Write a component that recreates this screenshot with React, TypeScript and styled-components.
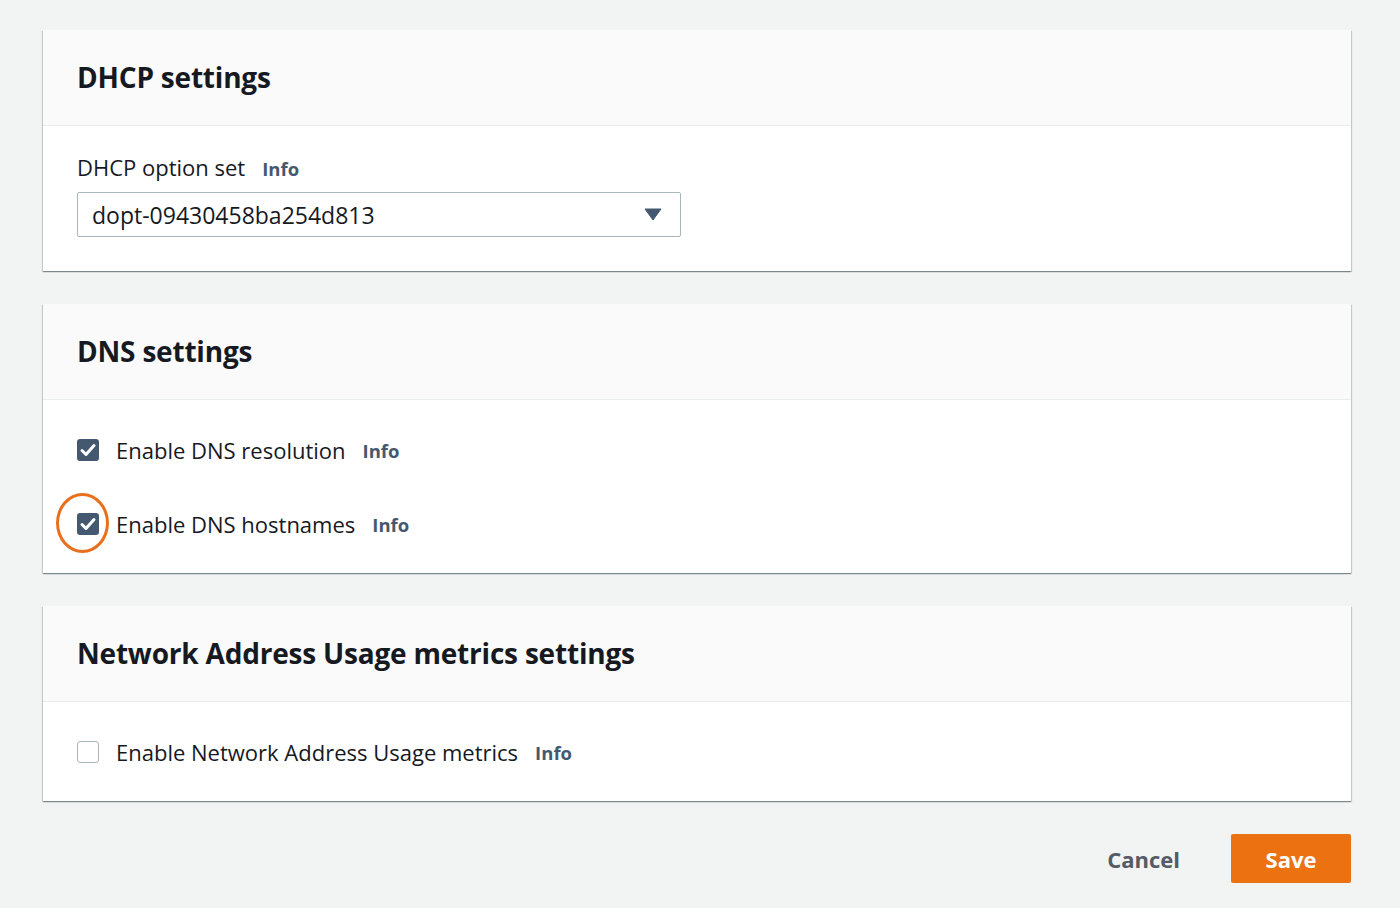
import React from "react";
import styled, { createGlobalStyle } from "styled-components";

const Global = createGlobalStyle`
  html, body { margin: 0; padding: 0; background: #f2f3f3; }
  body { font-family: "Open Sans", "Noto Sans", sans-serif; color: #16191f; }
  * { box-sizing: border-box; }
`;

const Page = styled.div`
  width: 1400px;
  height: 908px;
  padding: 30px 48px 0 43px;
  display: flex;
  flex-direction: column;
  gap: 33px;
`;

const Card = styled.section`
  background: #fff;
  width: 1308px;
  box-shadow: 0 1px 1px 0 rgba(0, 28, 36, 0.3), 1px 1px 1px 0 rgba(0, 28, 36, 0.15),
    -1px 1px 1px 0 rgba(0, 28, 36, 0.15);
`;

const CardHeader = styled.header`
  height: 96px;
  background: #fafafa;
  border-bottom: 1px solid #eaeded;
  display: flex;
  align-items: center;
  padding: 0 34px 2px;
`;

const Title = styled.h2`
  margin: 0;
  font-size: 28px;
  font-weight: 700;
  letter-spacing: -0.2px;
  color: #16191f;
`;

const CardBody = styled.div<{ $pt: number; $pb: number; $gap?: number }>`
  padding: ${(p) => p.$pt}px 34px ${(p) => p.$pb}px;
  display: flex;
  flex-direction: column;
  gap: ${(p) => p.$gap ?? 0}px;
`;

const LabelRow = styled.div`
  display: flex;
  align-items: baseline;
  gap: 17px;
  font-size: 22px;
  height: 28px;
  line-height: 26px;
  margin-bottom: 10px;
`;

const Info = styled.a`
  font-size: 18.5px;
  font-weight: 700;
  color: #44596f;
  text-decoration: none;
`;

const Select = styled.div`
  width: 604px;
  height: 45px;
  border: 1px solid #aab7b8;
  border-radius: 2px;
  display: flex;
  align-items: center;
  justify-content: space-between;
  padding: 0 18px 0 14px;
  font-size: 23px;
  color: #16191f;
`;

const CheckRow = styled.label`
  display: flex;
  align-items: center;
  height: 28px;
  font-size: 22px;
  position: relative;
`;

const Box = styled.span<{ $checked: boolean }>`
  width: 22px;
  height: 22px;
  border-radius: 3px;
  flex: none;
  margin-right: 17px;
  display: flex;
  align-items: center;
  justify-content: center;
  background: ${(p) => (p.$checked ? "#44596f" : "#fff")};
  border: ${(p) => (p.$checked ? "none" : "1.5px solid #aab7b8")};
`;

const Highlight = styled.span`
  position: absolute;
  left: -21px;
  top: -17px;
  width: 53px;
  height: 60px;
  border: 3px solid #e8701d;
  border-radius: 50%;
  pointer-events: none;
`;

const LabelText = styled.span`
  margin-right: 17px;
`;

const Footer = styled.div`
  display: flex;
  justify-content: flex-end;
  align-items: center;
  gap: 51px;
  width: 1308px;
`;

const TextButton = styled.button`
  background: none;
  border: none;
  font-family: inherit;
  font-size: 22px;
  font-weight: 700;
  color: #545b64;
  padding: 0;
`;

const PrimaryButton = styled.button`
  width: 120px;
  height: 49px;
  background: #ec7211;
  border: none;
  border-radius: 2px;
  color: #fff;
  font-family: inherit;
  font-size: 22px;
  font-weight: 700;
`;

const Check = () => (
  <svg width="22" height="22" viewBox="0 0 22 22">
    <path d="M5 11.5l4 4L17 6.5" fill="none" stroke="#fff" strokeWidth="3" strokeLinecap="round" strokeLinejoin="round" />
  </svg>
);

const Caret = () => (
  <svg width="18" height="13" viewBox="0 0 18 13">
    <path d="M1 1h16L9 12z" fill="#44596f" stroke="#44596f" strokeLinejoin="round" />
  </svg>
);

const Checkbox = ({ checked, label, circled }: { checked: boolean; label: string; circled?: boolean }) => (
  <CheckRow>
    {circled && <Highlight />}
    <Box $checked={checked}>{checked && <Check />}</Box>
    <LabelText>{label}</LabelText>
    <Info>Info</Info>
  </CheckRow>
);

export default function App() {
  return (
    <>
      <Global />
      <Page>
        <Card>
          <CardHeader>
            <Title>DHCP settings</Title>
          </CardHeader>
          <CardBody $pt={28} $pb={34}>
            <LabelRow>
              <span>DHCP option set</span>
              <Info>Info</Info>
            </LabelRow>
            <Select>
              <span>dopt-09430458ba254d813</span>
              <Caret />
            </Select>
          </CardBody>
        </Card>
        <Card>
          <CardHeader>
            <Title>DNS settings</Title>
          </CardHeader>
          <CardBody $pt={36} $pb={35} $gap={46}>
            <Checkbox checked label="Enable DNS resolution" />
            <Checkbox checked circled label="Enable DNS hostnames" />
          </CardBody>
        </Card>
        <Card>
          <CardHeader>
            <Title>Network Address Usage metrics settings</Title>
          </CardHeader>
          <CardBody $pt={36} $pb={35}>
            <Checkbox checked={false} label="Enable Network Address Usage metrics" />
          </CardBody>
        </Card>
        <Footer>
          <TextButton>Cancel</TextButton>
          <PrimaryButton>Save</PrimaryButton>
        </Footer>
      </Page>
    </>
  );
}
